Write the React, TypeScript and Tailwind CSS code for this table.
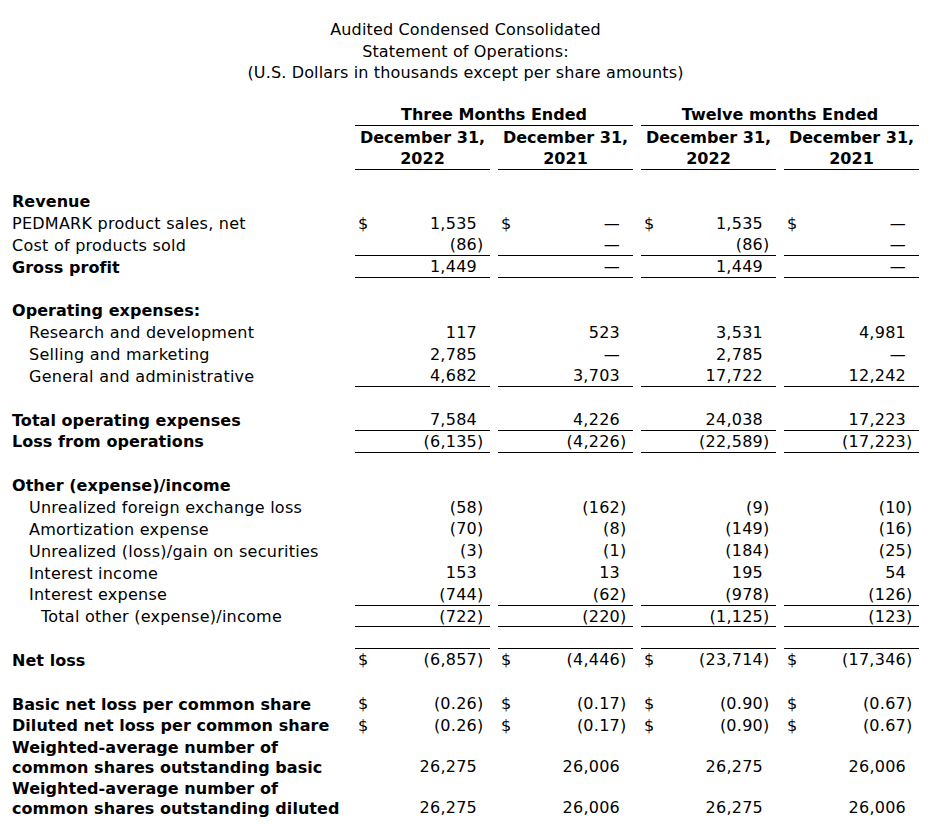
import React from 'react'

type Row = {
  label?: string
  indent?: number
  bold?: boolean
  vals?: string[]
  dollar?: boolean
  border?: boolean
  twoLine?: boolean
}

const D = '—'

const rows: Row[] = [
  { label: 'Revenue', bold: true },
  { label: 'PEDMARK product sales, net', vals: ['1,535', D, '1,535', D], dollar: true },
  { label: 'Cost of products sold', vals: ['(86)', D, '(86)', D], border: true },
  { label: 'Gross profit', bold: true, vals: ['1,449', D, '1,449', D], border: true },
  {},
  { label: 'Operating expenses:', bold: true },
  { label: 'Research and development', indent: 1, vals: ['117', '523', '3,531', '4,981'] },
  { label: 'Selling and marketing', indent: 1, vals: ['2,785', D, '2,785', D] },
  { label: 'General and administrative', indent: 1, vals: ['4,682', '3,703', '17,722', '12,242'], border: true },
  {},
  { label: 'Total operating expenses', bold: true, vals: ['7,584', '4,226', '24,038', '17,223'], border: true },
  { label: 'Loss from operations', bold: true, vals: ['(6,135)', '(4,226)', '(22,589)', '(17,223)'], border: true },
  {},
  { label: 'Other (expense)/income', bold: true },
  { label: 'Unrealized foreign exchange loss', indent: 1, vals: ['(58)', '(162)', '(9)', '(10)'] },
  { label: 'Amortization expense', indent: 1, vals: ['(70)', '(8)', '(149)', '(16)'] },
  { label: 'Unrealized (loss)/gain on securities', indent: 1, vals: ['(3)', '(1)', '(184)', '(25)'] },
  { label: 'Interest income', indent: 1, vals: ['153', '13', '195', '54'] },
  { label: 'Interest expense', indent: 1, vals: ['(744)', '(62)', '(978)', '(126)'], border: true },
  { label: 'Total other (expense)/income', indent: 2, vals: ['(722)', '(220)', '(1,125)', '(123)'], border: true },
  { vals: ['', '', '', ''], border: true },
  { label: 'Net loss', bold: true, vals: ['(6,857)', '(4,446)', '(23,714)', '(17,346)'], dollar: true },
  {},
  { label: 'Basic net loss per common share', bold: true, vals: ['(0.26)', '(0.17)', '(0.90)', '(0.67)'], dollar: true },
  { label: 'Diluted net loss per common share', bold: true, vals: ['(0.26)', '(0.17)', '(0.90)', '(0.67)'], dollar: true },
  { label: 'Weighted-average number of\ncommon shares outstanding basic', bold: true, vals: ['26,275', '26,006', '26,275', '26,006'], twoLine: true },
  { label: 'Weighted-average number of\ncommon shares outstanding diluted', bold: true, vals: ['26,275', '26,006', '26,275', '26,006'], twoLine: true },
]

// label column + four 135px money columns, 8px apart
const grid = 'grid grid-cols-[335px_135px_135px_135px_135px] gap-x-2'

function ValueCell({ v, dollar, border, twoLine }: { v: string; dollar?: boolean; border?: boolean; twoLine?: boolean }) {
  const neg = v.startsWith('(')
  const body = neg ? v.slice(0, -1) : v
  return (
    <div
      className={`flex justify-between box-border pl-[3px] pr-[6px] leading-[19.4px] tracking-[0.25px] ${twoLine ? 'items-end pb-[1.2px]' : 'items-start pt-[1.2px]'} ${border ? 'border-b border-black' : ''}`}
    >
      <span>{dollar ? '$' : ''}</span>
      <span className="flex">
        <span>{body}</span>
        <span className="inline-block w-[7px]">{neg ? ')' : ''}</span>
      </span>
    </div>
  )
}

export default function App() {
  return (
    <div className="bg-white text-black font-['DejaVu_Sans','Verdana',sans-serif] text-[16px] pl-[12px] w-[919px] pb-4">
      <div className="pt-[19px] text-center leading-[21.5px] tracking-[0.15px]">
        <div>Audited Condensed Consolidated</div>
        <div>Statement of Operations:</div>
        <div>(U.S. Dollars in thousands except per share amounts)</div>
      </div>

      <div className="mt-[20px]">
        <div className={`${grid} h-[21px] font-bold leading-[20px]`}>
          <div />
          <div className="col-span-2 box-border border-b border-black text-center pt-[1px]">Three Months Ended</div>
          <div className="col-span-2 box-border border-b border-black text-center pt-[1px]">Twelve months Ended</div>
        </div>
        <div className={`${grid} h-[45px] font-bold leading-[21px]`}>
          <div />
          {['2022', '2021', '2022', '2021'].map((y, i) => (
            <div key={i} className="box-border border-b border-black text-center pt-[2px]">
              December 31,
              <br />
              {y}
            </div>
          ))}
        </div>
        <div className="h-[21px]" />

        {rows.map((r, i) => (
          <div key={i} className={`${grid} ${r.twoLine ? '' : 'h-[21.85px]'}`}>
            <div
              className={`leading-[19.4px] pt-[1.7px] pb-[0.7px] whitespace-pre-line ${r.bold ? 'font-bold tracking-[0.05px]' : 'tracking-[0.25px]'} ${
                r.indent === 1 ? 'pl-[17px]' : r.indent === 2 ? 'pl-[29px]' : ''
              }`}
            >
              {r.label}
            </div>
            {r.vals &&
              r.vals.map((v, j) => (
                <ValueCell key={j} v={v} dollar={r.dollar} border={r.border} twoLine={r.twoLine} />
              ))}
          </div>
        ))}
      </div>
    </div>
  )
}
